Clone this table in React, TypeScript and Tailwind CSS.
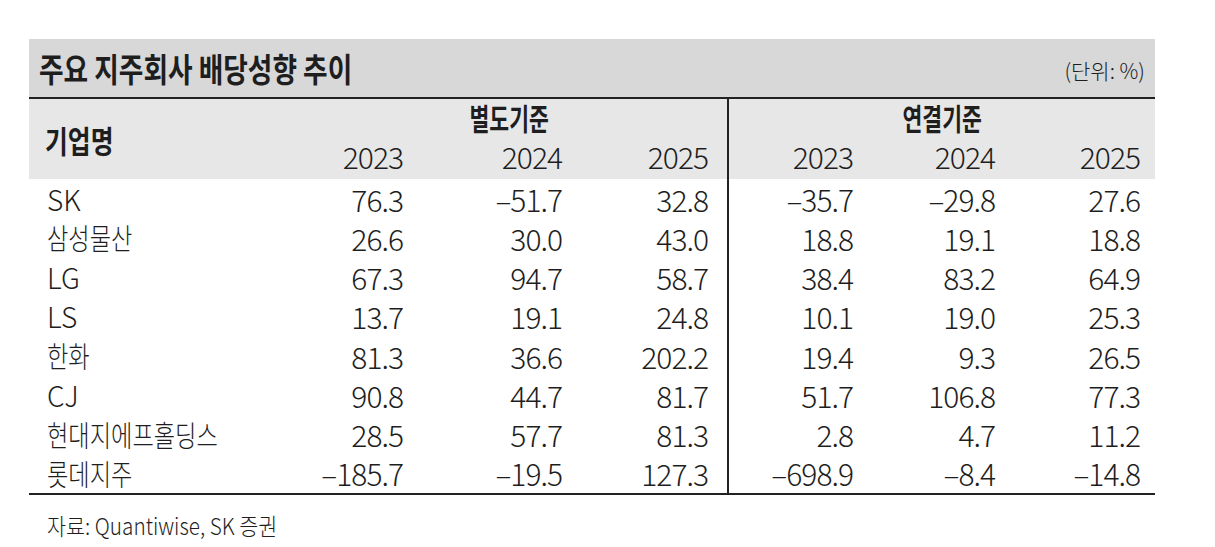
const rows: { name: string; latin?: boolean; v: string[] }[] = [
  { name: "SK", latin: true, v: ["76.3", "–51.7", "32.8", "–35.7", "–29.8", "27.6"] },
  { name: "삼성물산", v: ["26.6", "30.0", "43.0", "18.8", "19.1", "18.8"] },
  { name: "LG", latin: true, v: ["67.3", "94.7", "58.7", "38.4", "83.2", "64.9"] },
  { name: "LS", latin: true, v: ["13.7", "19.1", "24.8", "10.1", "19.0", "25.3"] },
  { name: "한화", v: ["81.3", "36.6", "202.2", "19.4", "9.3", "26.5"] },
  { name: "CJ", latin: true, v: ["90.8", "44.7", "81.7", "51.7", "106.8", "77.3"] },
  { name: "현대지에프홀딩스", v: ["28.5", "57.7", "81.3", "2.8", "4.7", "11.2"] },
  { name: "롯데지주", v: ["–185.7", "–19.5", "127.3", "–698.9", "–8.4", "–14.8"] },
];

// right padding per numeric column, the 4th one carries the divider
const cellPad = ["pr-[18px]", "pr-[18px]", "pr-[19px]", "pr-[17px] border-l-2 border-[#222]", "pr-[18px]", "pr-[15px]"];
const years = ["2023", "2024", "2025", "2023", "2024", "2025"];

export default function App() {
  return (
    <div className="min-h-[547px] w-[1215px] bg-white pt-[39px] pl-[29px] text-[#1e1e1e] font-['Noto_Sans_CJK_KR',sans-serif]">
      <div className="w-[1126px]">
        {/* title bar */}
        <div className="flex h-[60px] items-center justify-between border-b-2 border-[#222] bg-[#d8d8d8] pl-[10px] pr-[10px]">
          <span className="inline-block origin-left scale-x-[0.81] whitespace-nowrap text-[33px] font-bold leading-none">
            주요 지주회사 배당성향 추이
          </span>
          <span className="pt-[4px] text-[21px] font-light leading-none whitespace-nowrap">(단위: %)</span>
        </div>

        {/* header */}
        <div className="grid grid-cols-[234px_158px_159px_147px_143px_143px_142px] grid-rows-[40px_40px] bg-[#e7e7e7]">
          <div className="row-span-2 flex items-center pl-[16px]">
            <span className="inline-block origin-left scale-x-[0.8] text-[31px] font-bold leading-none whitespace-nowrap">기업명</span>
          </div>
          <div className="col-span-3 flex items-center justify-center pb-[4px] pl-[28px]">
            <span className="inline-block scale-x-[0.72] text-[30px] font-bold leading-none whitespace-nowrap">별도기준</span>
          </div>
          <div className="col-span-3 flex items-center justify-center border-l-2 border-[#222] pb-[4px]">
            <span className="inline-block scale-x-[0.72] text-[30px] font-bold leading-none whitespace-nowrap">연결기준</span>
          </div>
          {years.map((y, i) => (
            <div key={i} className={`flex items-center justify-end pb-[6px] ${cellPad[i]}`}>
              <span className="text-[30px] font-light leading-none tracking-[-1px]">{y}</span>
            </div>
          ))}
        </div>

        {/* body */}
        <div className="border-b-2 border-[#222]">
          {rows.map((r) => (
            <div key={r.name} className="grid h-[39.25px] grid-cols-[234px_158px_159px_147px_143px_143px_142px]">
              <div className="flex items-center pl-[18px]">
                {r.latin ? (
                  <span className="text-[28px] font-light leading-none">{r.name}</span>
                ) : (
                  <span className="inline-block origin-left scale-x-[0.8] text-[29px] font-light leading-none whitespace-nowrap">{r.name}</span>
                )}
              </div>
              {r.v.map((v, i) => (
                <div key={i} className={`flex items-center justify-end ${cellPad[i]}`}>
                  <span className="text-[30px] font-light leading-none tracking-[-1px] whitespace-nowrap">{v}</span>
                </div>
              ))}
            </div>
          ))}
        </div>

        <div className="mt-[19px] pl-[18px]">
          <span className="inline-block origin-left scale-x-[0.9] text-[23px] font-light leading-none whitespace-nowrap">자료: Quantiwise, SK 증권</span>
        </div>
      </div>
    </div>
  );
}
